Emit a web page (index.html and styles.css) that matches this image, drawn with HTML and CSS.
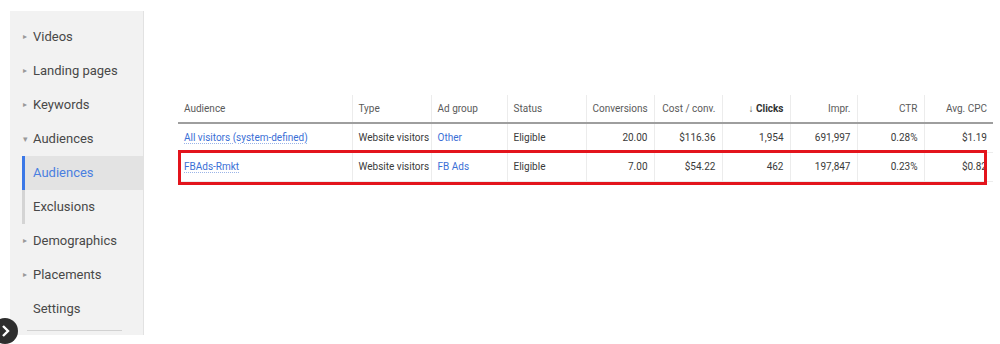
FILE: index.html
```html
<!DOCTYPE html>
<html lang="en">
<head>
    <meta charset="UTF-8">
    <title>Audiences</title>
    <link rel="stylesheet" href="styles.css">
</head>
<body>

<div class="page">
    <div class="sidebar">
        <div class="nav-item"><span class="caret">&#9656;</span>Videos</div>
        <div class="nav-item"><span class="caret">&#9656;</span>Landing pages</div>
        <div class="nav-item"><span class="caret">&#9656;</span>Keywords</div>
        <div class="nav-item"><span class="caret open">&#9662;</span>Audiences</div>
        <div class="sub-group">
            <div class="sub-item selected">Audiences</div>
            <div class="sub-item">Exclusions</div>
        </div>
        <div class="nav-item"><span class="caret">&#9656;</span>Demographics</div>
        <div class="nav-item"><span class="caret">&#9656;</span>Placements</div>
        <div class="nav-item plain">Settings</div>
        <div class="divider"></div>
    </div>

    <div class="table-wrap">
        <table>
            <thead>
            <tr>
                <th class="c-aud">Audience</th>
                <th class="c-type">Type</th>
                <th class="c-group">Ad group</th>
                <th class="c-status">Status</th>
                <th class="num c-conv">Conversions</th>
                <th class="num c-cost">Cost / conv.</th>
                <th class="num c-clicks sorted"><span class="arrow">&#8595;</span> Clicks</th>
                <th class="num c-impr">Impr.</th>
                <th class="num c-ctr">CTR</th>
                <th class="num c-cpc">Avg. CPC</th>
            </tr>
            </thead>
            <tbody>
            <tr>
                <td><a class="link">All visitors (system-defined)</a></td>
                <td>Website visitors</td>
                <td><a class="link plain-link">Other</a></td>
                <td>Eligible</td>
                <td class="num">20.00</td>
                <td class="num">$116.36</td>
                <td class="num">1,954</td>
                <td class="num">691,997</td>
                <td class="num">0.28%</td>
                <td class="num">$1.19</td>
            </tr>
            <tr>
                <td><a class="link">FBAds-Rmkt</a></td>
                <td>Website visitors</td>
                <td><a class="link plain-link">FB Ads</a></td>
                <td>Eligible</td>
                <td class="num">7.00</td>
                <td class="num">$54.22</td>
                <td class="num">462</td>
                <td class="num">197,847</td>
                <td class="num">0.23%</td>
                <td class="num">$0.82</td>
            </tr>
            </tbody>
        </table>
        <div class="highlight"></div>
    </div>
</div>

<div class="fab">
    <svg width="26" height="26" viewBox="0 0 26 26">
        <path d="M11 8 L16 13 L11 18" fill="none" stroke="#fff" stroke-width="2.4"/>
    </svg>
</div>

</body>
</html>
```

FILE: styles.css
```css
body {
    margin: 0;
    font-family: Roboto, "Liberation Sans", sans-serif;
    background: #fff;
    overflow: hidden;
}
.page {
    display: flex;
    align-items: flex-start;
    height: 344px;
}
.sidebar {
    flex-shrink: 0;
    margin: 11px 0 0 10px;
    width: 134px;
    height: 324px;
    padding-top: 9px;
    box-sizing: border-box;
    background: #f2f2f2;
    border-right: 1px solid #e2e2e2;
    font-size: 13px;
    color: #484848;
}
.nav-item {
    height: 34px;
    line-height: 34px;
    padding-left: 13px;
    display: flex;
    align-items: center;
}
.nav-item.plain {
    padding-left: 23px;
}
.caret {
    width: 10px;
    font-size: 8px;
    color: #999;
}
.caret.open {
    font-size: 9px;
}
.sub-group {
    margin-left: 12px;
    border-left: 3px solid #d4d4d4;
}
.sub-item {
    height: 34px;
    line-height: 34px;
    padding-left: 8px;
}
.sub-item.selected {
    background: #e3e3e3;
    color: #4a7fe0;
    margin-left: -3px;
    border-left: 3px solid #3b78e7;
}
.divider {
    margin: 4px 0 0 17px;
    width: 95px;
    border-top: 1px solid #d2d2d2;
}
.table-wrap {
    position: relative;
    flex-shrink: 0;
    margin: 95px 0 0 34px;
}
table {
    border-collapse: collapse;
    width: 815px;
    font-size: 10px;
    color: #3a3a3a;
    table-layout: fixed;
}
th, td {
    box-sizing: border-box;
    padding: 0 6px;
    border-left: 1px solid #ececec;
    white-space: nowrap;
}
th {
    height: 28px;
    font-weight: 400;
    color: #5a5a5a;
    text-align: left;
    border-bottom: 2px solid #9e9e9e;
}
td {
    height: 29px;
    border-bottom: 1px solid #ececec;
}
th:first-child, td:first-child {
    border-left: none;
}
.num {
    text-align: right;
}
.c-aud { width: 174px; }
.c-type { width: 79px; }
.c-group { width: 76px; }
.c-status { width: 79px; }
.c-conv, .c-cost, .c-clicks { width: 68px; }
.c-impr, .c-ctr { width: 67px; }
.sorted {
    font-weight: 700;
    color: #333;
}
.arrow {
    font-weight: 400;
    color: #555;
}
.link {
    color: #3b6fd6;
    text-decoration: underline dotted #9ab4e8;
    text-underline-offset: 2px;
}
.plain-link {
    text-decoration: none;
}
.highlight {
    position: absolute;
    left: 0;
    top: 55px;
    width: 809px;
    height: 35px;
    box-sizing: border-box;
    border: 3px solid #e3141c;
}
.fab {
    position: absolute;
    left: -8px;
    top: 318px;
    width: 26px;
    height: 26px;
    border-radius: 50%;
    background: #2e2e2e;
    display: flex;
    justify-content: center;
    align-items: center;
}
```
